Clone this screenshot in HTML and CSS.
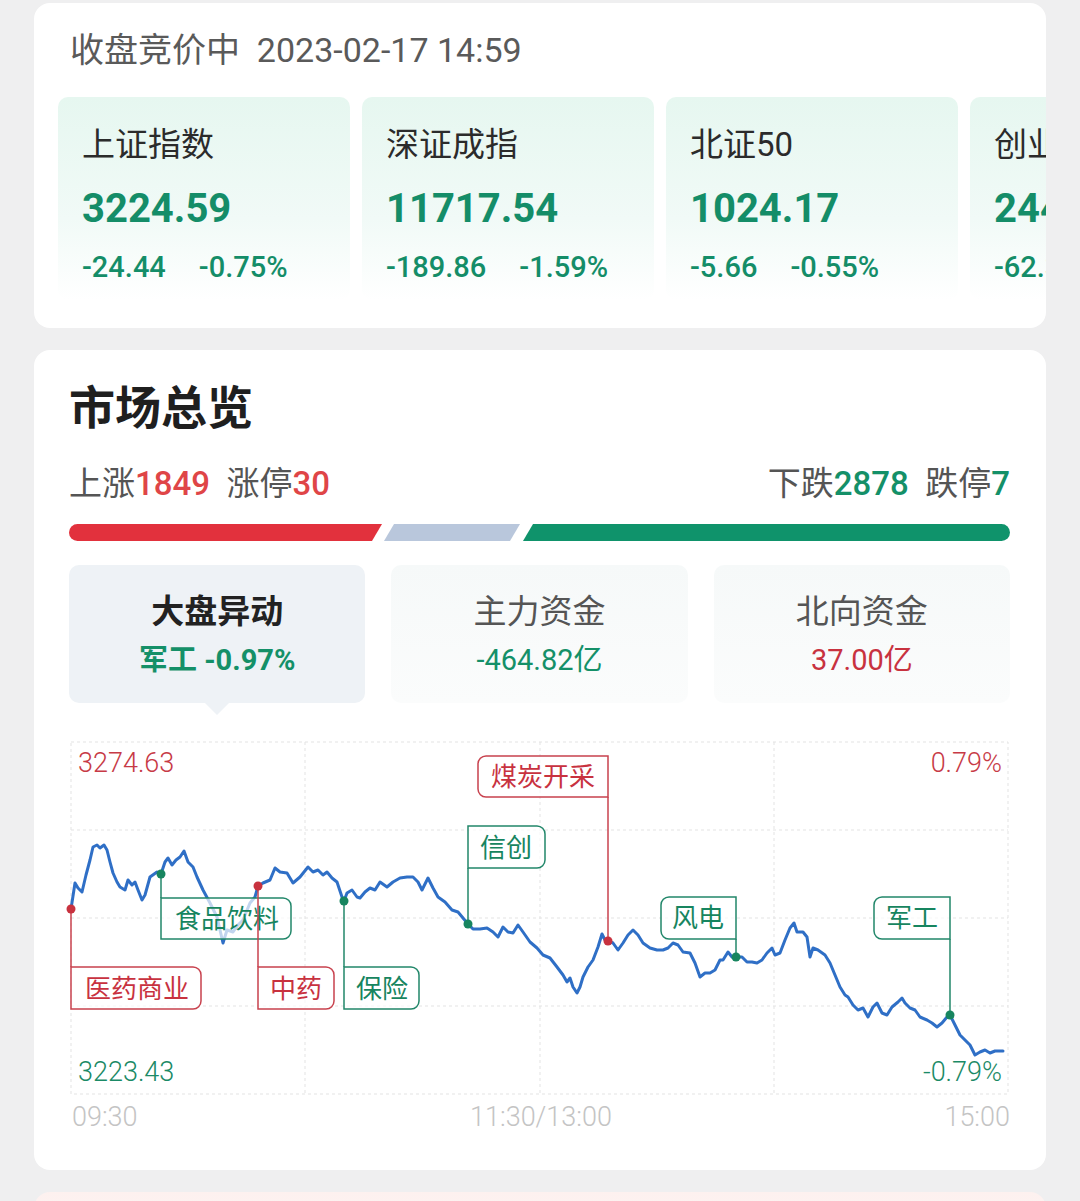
FILE: index.html
```html
<!DOCTYPE html>
<html lang="zh-CN">
<head>
    <meta charset="UTF-8">
    <meta name="viewport" content="width=device-width, initial-scale=1.0">
    <title>市场总览</title>
    <link rel="stylesheet" href="styles.css">
</head>
<body>
    <div class="card indices">
        <div class="status">收盘竞价中&nbsp;&nbsp;2023-02-17 14:59</div>
        <div class="index-row">
            <div class="index">
                <div class="index-name">上证指数</div>
                <div class="index-value">3224.59</div>
                <div class="index-change"><span>-24.44</span><span>-0.75%</span></div>
            </div>
            <div class="index">
                <div class="index-name">深证成指</div>
                <div class="index-value">11717.54</div>
                <div class="index-change"><span>-189.86</span><span>-1.59%</span></div>
            </div>
            <div class="index">
                <div class="index-name">北证50</div>
                <div class="index-value">1024.17</div>
                <div class="index-change"><span>-5.66</span><span>-0.55%</span></div>
            </div>
            <div class="index">
                <div class="index-name">创业板指</div>
                <div class="index-value">2445.96</div>
                <div class="index-change"><span>-62.35</span><span>-2.49%</span></div>
            </div>
        </div>
    </div>

    <div class="card overview">
        <h2 class="title">市场总览</h2>
        <div class="stats">
            <div>上涨<b class="up">1849</b>&nbsp;&nbsp;涨停<b class="up">30</b></div>
            <div>下跌<b class="down">2878</b>&nbsp;&nbsp;跌停<b class="down">7</b></div>
        </div>
        <svg class="ratio" width="941" height="17" viewBox="0 0 941 17">
            <path d="M8.5,0 H313 L303,17 H8.5 A8.5,8.5 0 0 1 8.5,0 Z" fill="#e2313d"/>
            <path d="M325,0 H451 L441,17 H315 Z" fill="#b9c7dc"/>
            <path d="M464,0 H932.5 A8.5,8.5 0 0 1 932.5,17 H454 Z" fill="#0f936b"/>
        </svg>

        <div class="tabs">
            <div class="tab active">
                <div class="tab-name">大盘异动</div>
                <div class="tab-value down">军工 -0.97%</div>
            </div>
            <div class="tab">
                <div class="tab-name">主力资金</div>
                <div class="tab-value down">-464.82亿</div>
            </div>
            <div class="tab">
                <div class="tab-name">北向资金</div>
                <div class="tab-value up">37.00亿</div>
            </div>
        </div>

        <svg class="chart" width="937" height="352" viewBox="71 742 937 352">
            <g class="grid">
                <rect x="71" y="742" width="937" height="352"/>
                <path d="M305,742 V1094 M540,742 V1094 M774,742 V1094 M71,830 H1008 M71,918 H1008 M71,1006 H1008"/>
            </g>
            <text class="axis red-text" x="78" y="763">3274.63</text>
            <text class="axis red-text" x="1002" y="763" text-anchor="end">0.79%</text>
            <text class="axis green-text" x="78" y="1072">3223.43</text>
            <text class="axis green-text" x="1002" y="1072" text-anchor="end">-0.79%</text>

            <polyline class="line" points="71,909 75,883 78,888 82,892 86,875 90,860 93,847 97,845 100,848 104,845 107,850 110,862 113,873 117,882 120,887 125,890 128,880 132,885 135,882 138,890 142,900 145,895 150,877 157,872 161,874 165,862 168,858 172,865 176,860 180,857 184,851 188,862 193,867 197,877 203,890 210,903 217,917 223,943 227,930 233,932 238,925 243,920 250,903 255,897 258,886 263,883 270,880 275,868 280,872 287,873 293,883 300,877 308,867 313,872 318,870 323,875 327,872 332,878 337,882 342,897 344,901 347,893 352,890 357,897 360,898 365,892 370,888 375,890 380,882 387,887 393,882 400,878 407,877 413,877 418,882 422,890 428,878 433,888 438,897 445,902 452,910 458,912 463,918 468,924 473,929 480,929 487,928 493,932 498,937 503,927 508,932 513,933 518,925 523,932 530,942 537,948 543,955 550,958 557,967 563,975 567,982 570,978 573,987 577,993 580,987 583,977 588,967 593,960 598,947 602,934 605,940 608,941 613,943 618,950 623,943 628,935 633,930 638,935 643,943 650,948 657,950 663,950 668,948 673,943 678,945 683,952 690,953 695,963 700,977 705,973 710,973 715,970 720,960 723,960 728,952 732,957 736,957 742,957 747,962 752,962 757,963 762,960 767,953 772,948 775,955 780,953 785,940 790,928 794,923 797,932 803,932 807,937 810,957 813,948 818,950 825,955 830,963 835,975 840,987 845,995 848,997 853,1005 858,1010 863,1008 868,1017 873,1007 877,1003 882,1013 887,1015 892,1007 898,1002 902,998 905,1003 910,1008 915,1010 920,1017 927,1020 932,1023 937,1027 942,1023 947,1017 950,1015 955,1025 960,1035 965,1040 970,1045 975,1055 980,1052 985,1050 990,1053 995,1051 1003,1051"/>

            <!-- 异动标注 -->
            <g class="tag red">
                <path d="M71,909 V967"/>
                <path class="box" d="M71,967 H193 A8,8 0 0 1 201,975 V1001 A8,8 0 0 1 193,1009 H71 Z"/>
                <text x="137" y="989">医药商业</text>
                <circle cx="71" cy="909" r="4.5"/>
            </g>
            <g class="tag green">
                <path d="M161,874 V898"/>
                <path class="box" d="M161,898 H283 A8,8 0 0 1 291,906 V931 A8,8 0 0 1 283,939 H161 Z"/>
                <text x="227" y="919">食品饮料</text>
                <circle cx="161" cy="874" r="4.5"/>
            </g>
            <g class="tag red">
                <path d="M258,886 V967"/>
                <path class="box" d="M258,967 H326 A8,8 0 0 1 334,975 V1001 A8,8 0 0 1 326,1009 H258 Z"/>
                <text x="296" y="989">中药</text>
                <circle cx="258" cy="886" r="4.5"/>
            </g>
            <g class="tag green">
                <path d="M344,901 V967"/>
                <path class="box" d="M344,967 H411 A8,8 0 0 1 419,975 V1001 A8,8 0 0 1 411,1009 H344 Z"/>
                <text x="382" y="989">保险</text>
                <circle cx="344" cy="901" r="4.5"/>
            </g>
            <g class="tag green">
                <path d="M468,868 V924"/>
                <path class="box" d="M468,826 H537 A8,8 0 0 1 545,834 V860 A8,8 0 0 1 537,868 H468 Z"/>
                <text x="506" y="848">信创</text>
                <circle cx="468" cy="924" r="4.5"/>
            </g>
            <g class="tag red">
                <path d="M608,797 V941"/>
                <path class="box" d="M608,756 V797 H486 A8,8 0 0 1 478,789 V764 A8,8 0 0 1 486,756 Z"/>
                <text x="543" y="777">煤炭开采</text>
                <circle cx="608" cy="941" r="4.5"/>
            </g>
            <g class="tag green">
                <path d="M736,939 V957"/>
                <path class="box" d="M736,897 V939 H669 A8,8 0 0 1 661,931 V905 A8,8 0 0 1 669,897 Z"/>
                <text x="698" y="918">风电</text>
                <circle cx="736" cy="957" r="4.5"/>
            </g>
            <g class="tag green">
                <path d="M950,939 V1015"/>
                <path class="box" d="M950,897 V939 H882 A8,8 0 0 1 874,931 V905 A8,8 0 0 1 882,897 Z"/>
                <text x="912" y="918">军工</text>
                <circle cx="950" cy="1015" r="4.5"/>
            </g>
        </svg>
        <div class="times">
            <span>09:30</span>
            <span>11:30/13:00</span>
            <span>15:00</span>
        </div>
    </div>

    <div class="card next"></div>
</body>
</html>
```

FILE: styles.css
```css
body {
    font-family: Roboto, "Noto Sans CJK SC", sans-serif;
    background-color: #efeff0;
    color: #333;
    margin: 0;
    padding: 3px 34px 0;
}
.card {
    background: #fff;
    border-radius: 16px;
    overflow: hidden;
}

/* 指数 */
.indices {
    padding: 27px 0 28px;
}
.status {
    padding-left: 36px;
    font-size: 34px;
    line-height: 40px;
    color: #5a5a5a;
}
.index-row {
    display: flex;
    gap: 12px;
    margin-top: 27px;
    padding-left: 24px;
}
.index {
    flex: 0 0 292px;
    box-sizing: border-box;
    padding: 28px 0 16px 24px;
    border-radius: 10px;
    background: linear-gradient(180deg, #e6f7f0 0%, #f1faf7 60%, #ffffff 100%);
}
.index-name {
    font-size: 33px;
    line-height: 40px;
    color: #2b2b2b;
}
.index-value {
    margin-top: 20px;
    font-size: 40px;
    line-height: 48px;
    font-weight: 700;
    color: #148d68;
}
.index-change {
    display: flex;
    gap: 33px;
    margin-top: 17px;
    font-size: 29px;
    line-height: 34px;
    font-weight: 500;
    color: #148d68;
    white-space: nowrap;
}

/* 市场总览 */
.overview {
    margin-top: 22px;
    padding: 30px 36px 38px 35px;
}
.title {
    margin: 0;
    font-size: 46px;
    line-height: 56px;
    font-weight: 700;
    color: #1f1f1f;
}
.stats {
    display: flex;
    justify-content: space-between;
    margin-top: 28px;
    font-size: 33px;
    line-height: 40px;
    color: #555;
}
.stats b {
    font-weight: 500;
}
.up {
    color: #df4547;
}
.down {
    color: #149068;
}
.ratio {
    display: block;
    margin-top: 20px;
}
.tabs {
    display: grid;
    grid-template-columns: repeat(3, 1fr);
    gap: 26px;
    margin-top: 24px;
}
.tab {
    position: relative;
    height: 138px;
    border-radius: 10px;
    background: linear-gradient(180deg, #f6f9f9 0%, #fbfcfc 100%);
    display: flex;
    flex-direction: column;
    align-items: center;
    justify-content: center;
    gap: 6px;
    padding-top: 2px;
    box-sizing: border-box;
}
.tab.active {
    background: #eef2f6;
}
.tab.active::after {
    content: "";
    position: absolute;
    left: 50%;
    bottom: -12px;
    margin-left: -12px;
    border-left: 12px solid transparent;
    border-right: 12px solid transparent;
    border-top: 12px solid #eef2f6;
}
.tab-name {
    font-size: 33px;
    line-height: 44px;
    color: #555;
}
.active .tab-name {
    font-weight: 700;
    color: #222;
}
.tab-value {
    font-size: 29px;
    line-height: 40px;
}
.active .tab-value {
    font-weight: 700;
}
.tab-value.up {
    color: #c8323f;
}

/* 分时图 */
.chart {
    display: block;
    margin: 39px 0 0 2px;
    overflow: visible;
    font-family: Roboto, "Noto Sans CJK SC", sans-serif;
}
.grid {
    fill: none;
    stroke: #e3e3e3;
    stroke-width: 1;
    stroke-dasharray: 3 3;
}
.axis {
    font-size: 27px;
    font-weight: 300;
    dominant-baseline: central;
}
.red-text {
    fill: #c73a46;
}
.green-text {
    fill: #1b8a66;
}
.line {
    fill: none;
    stroke: #2f6fc6;
    stroke-width: 3;
    stroke-linejoin: round;
    stroke-linecap: round;
}
.tag path {
    fill: none;
    stroke-width: 1.5;
}
.tag .box {
    fill: rgba(255, 255, 255, 0.7);
}
.tag text {
    font-size: 26px;
    text-anchor: middle;
    dominant-baseline: central;
}
.tag.red path {
    stroke: #c8424e;
}
.tag.red text,
.tag.red circle {
    fill: #c8323f;
}
.tag.green path {
    stroke: #22876a;
}
.tag.green text,
.tag.green circle {
    fill: #17855f;
}
.times {
    display: flex;
    justify-content: space-between;
    margin: 8px 0 0 3px;
    font-size: 27px;
    line-height: 30px;
    font-weight: 300;
    color: #c4c4c4;
}

.next {
    margin-top: 22px;
    height: 60px;
    border-radius: 16px 16px 0 0;
    background: linear-gradient(180deg, #fdf1ef 0%, #fdf6f5 100%);
}
```
